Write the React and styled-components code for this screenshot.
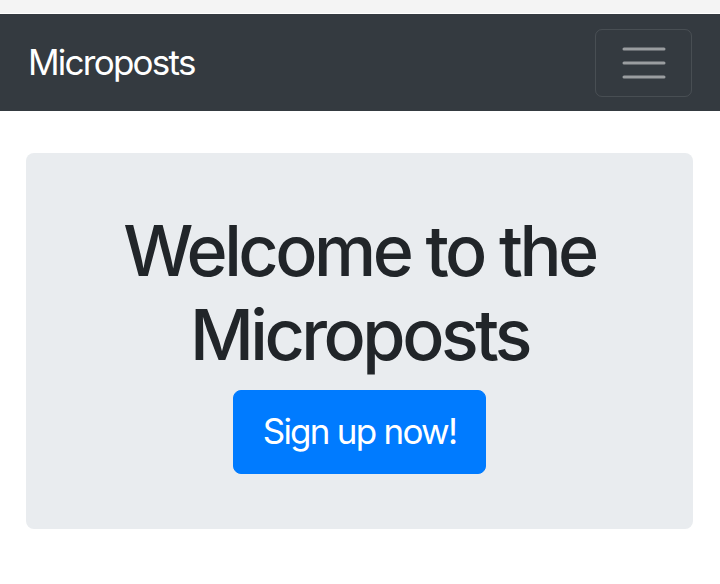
import React from 'react'
import styled, { createGlobalStyle } from 'styled-components'

const GlobalStyle = createGlobalStyle`
  html, body {
    margin: 0;
    padding: 0;
    background: #fff;
  }
  body {
    font-family: Inter, "Liberation Sans", Arial, sans-serif;
    color: #212529;
  }
`

const TopStrip = styled.div`
  height: 13px;
  background: #f4f4f4;
  border-bottom: 1px solid #fff;
`

const Navbar = styled.nav`
  display: flex;
  align-items: center;
  justify-content: space-between;
  height: 97px;
  box-sizing: border-box;
  padding: 14px 28px;
  background: #343a40;
`

const Brand = styled.a`
  color: #fff;
  font-size: 35px;
  line-height: 1.5;
  letter-spacing: -0.05em;
  text-decoration: none;
`

const Toggler = styled.button`
  display: flex;
  align-items: center;
  justify-content: center;
  width: 97px;
  height: 68px;
  padding: 0;
  background: transparent;
  border: 1px solid rgba(255, 255, 255, 0.1);
  border-radius: 7px;
  cursor: pointer;
`

const Container = styled.main`
  padding: 42px 27px 0 26px;
`

const Jumbotron = styled.section`
  display: flex;
  flex-direction: column;
  align-items: center;
  padding: 56px 28px 55px;
  background: #e9ecef;
  border-radius: 8px;
  text-align: center;
`

const Heading = styled.h1`
  margin: 0 0 13px;
  font-size: 70px;
  font-weight: 500;
  line-height: 84px;
  letter-spacing: -0.05em;
  color: #212529;
`

const PrimaryButton = styled.a`
  display: inline-block;
  padding: 14px 29px 15px;
  font-size: 35px;
  line-height: 53px;
  letter-spacing: -0.05em;
  color: #fff;
  background: #007bff;
  border: 1px solid #007bff;
  border-radius: 8px;
  text-decoration: none;
`

const App = () => {
  return <>
    <GlobalStyle />
    <TopStrip />
    <Navbar>
      <Brand href="#">Microposts</Brand>
      <Toggler type="button" aria-label="Toggle navigation">
        <svg width="46" height="34" viewBox="0 0 46 34">
          <g stroke="rgba(255,255,255,0.5)" strokeWidth="3" strokeLinecap="round">
            <line x1="3" y1="3" x2="43" y2="3" />
            <line x1="3" y1="17" x2="43" y2="17" />
            <line x1="3" y1="31" x2="43" y2="31" />
          </g>
        </svg>
      </Toggler>
    </Navbar>
    <Container>
      <Jumbotron>
        <Heading>Welcome to the Microposts</Heading>
        <PrimaryButton href="#">Sign up now!</PrimaryButton>
      </Jumbotron>
    </Container>
  </>
}

export default App
